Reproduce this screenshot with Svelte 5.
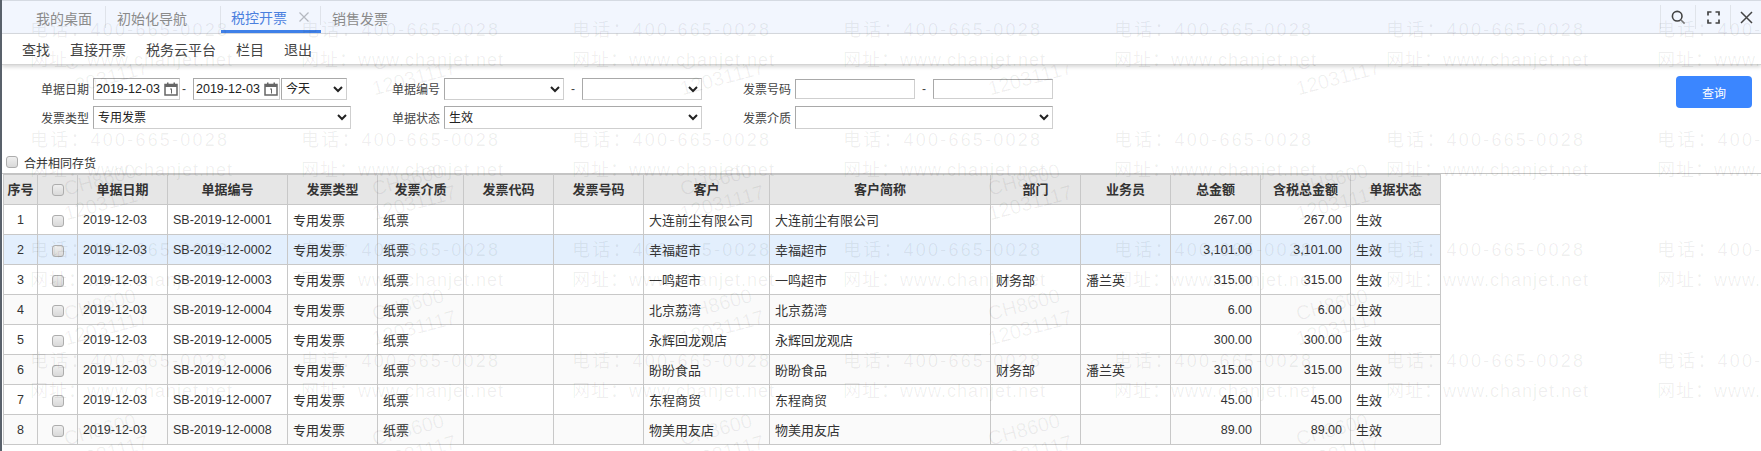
<script>
	const tabs = [
		{ name: '我的桌面', cls: '' },
		{ name: '初始化导航', cls: 'wide' },
		{ name: '税控开票', cls: 'active' },
		{ name: '销售发票', cls: 'last' }
	];
	const actions = ['查找', '直接开票', '税务云平台', '栏目', '退出'];

	const columns = [
		['序号', 34], ['', 40], ['单据日期', 90], ['单据编号', 120], ['发票类型', 90],
		['发票介质', 86], ['发票代码', 90], ['发票号码', 90], ['客户', 126], ['客户简称', 221],
		['部门', 90], ['业务员', 90], ['总金额', 90], ['含税总金额', 90], ['单据状态', 90]
	];

	const rows = [
		['大连前尘有限公司', '', '', '267.00'],
		['幸福超市', '', '', '3,101.00'],
		['一鸣超市', '财务部', '潘兰英', '315.00'],
		['北京荔湾', '', '', '6.00'],
		['永辉回龙观店', '', '', '300.00'],
		['盼盼食品', '财务部', '潘兰英', '315.00'],
		['东程商贸', '', '', '45.00'],
		['物美用友店', '', '', '89.00']
	];

	// watermark tiles
	const phoneX = [30, 301, 572, 843, 1114, 1386, 1657];
	const phoneY = [30, 140, 250, 361];
	const stampX = [53, 361, 669, 977, 1285];
	const stampY = [-23, 102, 227, 352];
</script>

<div class="page">
	<header class="topbar">
		<nav class="tabs">
			{#each tabs as tab}
				<div class="tab {tab.cls}">
					<span>{tab.name}</span>
					{#if tab.cls === 'active'}
						<svg class="tab-close" width="10" height="10" viewBox="0 0 10 10">
							<path d="M0.5 0.5L9.5 9.5M9.5 0.5L0.5 9.5" stroke="#b4b8c0" stroke-width="1.2" fill="none" />
						</svg>
					{/if}
				</div>
			{/each}
		</nav>
		<div class="tools">
			<div class="tool">
				<svg width="15" height="15" viewBox="0 0 15 15" fill="none" stroke="#444" stroke-width="1.6">
					<circle cx="6.2" cy="6.2" r="4.8" />
					<path d="M10 10L13.6 13.6" stroke="#777" />
				</svg>
			</div>
			<div class="tool">
				<svg width="13" height="13" viewBox="0 0 13 13" fill="none" stroke="#444" stroke-width="1.7">
					<path d="M1 4.5V1H4.5M8.5 1H12V4.5M12 8.5V12H8.5M4.5 12H1V8.5" />
				</svg>
			</div>
			<div class="tool">
				<svg width="13" height="13" viewBox="0 0 13 13" fill="none" stroke="#444" stroke-width="1.5">
					<path d="M1 1L12 12M12 1L1 12" />
				</svg>
			</div>
		</div>
	</header>

	<div class="toolbar">
		{#each actions as action}
			<span>{action}</span>
		{/each}
	</div>

	<section class="filters">
		<div class="grid">
			<label class="lbl" for="d1">单据日期</label>
			<div class="ctrl">
				<div class="date">
					<input id="d1" value="2019-12-03" />
					<svg width="14" height="14" viewBox="0 0 14 14">
						<path d="M1 2.5H13V13H1Z" fill="none" stroke="#666" stroke-width="1.5" />
						<path d="M1 2H13V5H1Z M3 0.5H4.5V3H3Z M9.5 0.5H11V3H9.5Z M6 6.5H8V11.5H7V7.5H6Z" fill="#666" />
					</svg>
				</div>
				<span class="dash small">-</span>
				<div class="date">
					<input value="2019-12-03" />
					<svg width="14" height="14" viewBox="0 0 14 14">
						<path d="M1 2.5H13V13H1Z" fill="none" stroke="#666" stroke-width="1.5" />
						<path d="M1 2H13V5H1Z M3 0.5H4.5V3H3Z M9.5 0.5H11V3H9.5Z M6 6.5H8V11.5H7V7.5H6Z" fill="#666" />
					</svg>
				</div>
				<select class="today"><option>今天</option></select>
			</div>

			<label class="lbl" for="n1">单据编号</label>
			<div class="ctrl">
				<select id="n1" class="half"><option></option></select>
				<span class="dash">-</span>
				<select class="half"><option></option></select>
			</div>

			<label class="lbl" for="p1">发票号码</label>
			<div class="ctrl">
				<input id="p1" class="half code" />
				<span class="dash">-</span>
				<input class="half code" />
			</div>

			<label class="lbl" for="t1">发票类型</label>
			<select id="t1" class="full"><option>专用发票</option></select>

			<label class="lbl" for="s1">单据状态</label>
			<select id="s1" class="full"><option>生效</option></select>

			<label class="lbl" for="m1">发票介质</label>
			<select id="m1" class="full"><option></option></select>
		</div>
		<button class="search">查询</button>
	</section>

	<label class="merge"><input type="checkbox" class="check" />合并相同存货</label>

	<div class="list">
		<table>
			<colgroup>
				{#each columns as col}
					<col style="width: {col[1]}px" />
				{/each}
			</colgroup>
			<thead>
				<tr>
					{#each columns as col, i}
						<th>
							{#if i === 1}<input type="checkbox" class="check" />{:else}{col[0]}{/if}
						</th>
					{/each}
				</tr>
			</thead>
			<tbody>
				{#each rows as row, i}
					<tr class:selected={i === 1} class:alt={i > 1 && i % 2 === 1}>
						<td class="center latin">{i + 1}</td>
						<td class="center"><input type="checkbox" class="check" /></td>
						<td class="latin">2019-12-03</td>
						<td class="latin">SB-2019-12-000{i + 1}</td>
						<td>专用发票</td>
						<td>纸票</td>
						<td></td>
						<td></td>
						<td>{row[0]}</td>
						<td>{row[0]}</td>
						<td>{row[1]}</td>
						<td>{row[2]}</td>
						<td class="amount latin">{row[3]}</td>
						<td class="amount latin">{row[3]}</td>
						<td>生效</td>
					</tr>
				{/each}
			</tbody>
		</table>
	</div>

	<div class="stamps">
		{#each stampY as y}
			{#each stampX as x}
				<div class="stamp" style="left: {x}px; top: {y}px">CH8600<br />12031117</div>
			{/each}
		{/each}
	</div>
	<div class="marks">
		{#each phoneY as y}
			{#each phoneX as x}
				<div class="mark phone" style="left: {x}px; top: {y - 11}px">电话：400-665-0028</div>
				<div class="mark web" style="left: {x}px; top: {y + 19}px">网址：www.chanjet.net</div>
			{/each}
		{/each}
	</div>
</div>

<style>
	:global(body) {
		margin: 0;
		background: #fff;
	}

	.page {
		position: relative;
		width: 1761px;
		height: 451px;
		box-sizing: border-box;
		overflow: hidden;
		border-left: 2px solid #59616b;
		font-family: 'Liberation Sans', 'Noto Sans CJK SC', sans-serif;
		font-size: 13px;
		color: #333;
	}

	.topbar {
		display: flex;
		justify-content: space-between;
		height: 34px;
		box-sizing: border-box;
		margin-left: -2px;
		background: #f2f6fe;
		border-top: 1px solid #d5dae2;
		border-bottom: 1px solid #d8dbe0;
	}

	.tabs {
		display: flex;
		margin-left: 25px;
	}

	.tab {
		position: relative;
		display: flex;
		align-items: center;
		box-sizing: border-box;
		height: 32px;
		padding: 2px 14px 0 11px;
		font-size: 14px;
		color: #8b8b8b;
	}

	.tab::after {
		content: '';
		position: absolute;
		right: 0;
		top: 5px;
		bottom: 5px;
		width: 1px;
		background: #dfe3ea;
	}

	.tab.wide {
		padding-right: 34px;
	}

	.tab.active {
		padding: 3px 12px 0 10px;
		gap: 12px;
		color: #4a80de;
		border-bottom: 3px solid #3f80e8;
	}

	.tab.last::after {
		display: none;
	}

	.tools {
		display: flex;
	}

	.tool {
		display: flex;
		align-items: center;
		justify-content: center;
		width: 34px;
		height: 24px;
		margin-top: 4px;
		border-left: 1px solid #e0e4ea;
	}

	.tool:last-child {
		width: 30px;
	}

	.toolbar {
		display: flex;
		align-items: center;
		gap: 20px;
		height: 31px;
		box-sizing: border-box;
		padding-left: 20px;
		background: #fff;
		font-size: 14px;
		color: #444;
		border-bottom: 1px solid #d4d4d4;
		box-shadow: 0 2px 4px rgba(0, 0, 0, 0.16);
	}

	.filters {
		display: flex;
		justify-content: space-between;
		align-items: flex-start;
		padding: 12px 9px 0 1px;
		font-size: 12px;
	}

	.grid {
		display: grid;
		grid-template-columns: 90px 258px 93px 258px 93px 258px;
		grid-auto-rows: 23px;
		row-gap: 6px;
		align-items: center;
	}

	.lbl {
		padding-right: 4px;
		text-align: right;
		color: #444;
	}

	.ctrl {
		display: flex;
		align-items: center;
		height: 23px;
	}

	input,
	select {
		box-sizing: border-box;
		height: 22px;
		margin: 0;
		border: 1px solid;
		border-color: #a9a9a9 #cfcfcf #cfcfcf #a9a9a9;
		border-radius: 0;
		background: #fff;
		font: inherit;
		color: #222;
		outline: none;
	}

	.date {
		display: flex;
		align-items: center;
		box-sizing: border-box;
		width: 87px;
		height: 22px;
		padding-right: 1px;
		border: 1px solid;
		border-color: #a9a9a9 #cfcfcf #cfcfcf #a9a9a9;
	}

	.date input {
		flex: 1;
		min-width: 0;
		height: 18px;
		padding: 0 0 0 2px;
		border: 0;
		font-size: 12.5px;
	}

	.dash {
		width: 18px;
		text-align: center;
		color: #444;
	}

	.dash.small {
		width: 13px;
		text-align: left;
		padding-left: 2px;
		box-sizing: border-box;
	}

	.today {
		width: 66px;
		margin-left: 1px;
	}

	.half {
		width: 120px;
	}

	.code {
		height: 20px;
		padding: 0 2px;
	}

	.full {
		width: 258px;
		height: 23px;
	}

	.search {
		width: 76px;
		height: 32px;
		margin-top: -1px;
		padding: 0;
		border: 0;
		border-radius: 4px;
		background: #3b86ff;
		font: inherit;
		color: #fff;
	}

	.merge {
		display: flex;
		align-items: center;
		gap: 6px;
		height: 14px;
		margin: 26px 0 4px 4px;
		font-size: 12px;
		color: #333;
	}

	input.check {
		appearance: none;
		box-sizing: border-box;
		width: 12px;
		height: 12px;
		border: 1px solid #adadad;
		border-radius: 3px;
		background: linear-gradient(#efefef, #d9d9d9);
		vertical-align: middle;
	}

	.list {
		border-top: 1px solid #c4c4c4;
	}

	table {
		table-layout: fixed;
		width: 1438px;
		margin-left: 1px;
		border-collapse: collapse;
		font-size: 13px;
	}

	th,
	td {
		height: 29px;
		padding: 0 5px;
		border: 1px solid #c8c8c8;
		overflow: hidden;
		white-space: nowrap;
		box-sizing: content-box;
	}

	th {
		height: 27px;
		padding: 0 0 2px;
		background: #e6e6e6;
		border-top: 1px solid #c4c4c4;
		font-weight: 700;
		text-align: center;
		color: #333;
	}

	td {
		color: #333;
	}

	.latin {
		font-size: 12.5px;
	}

	.center {
		padding: 0;
		text-align: center;
	}

	.amount {
		padding-right: 8px;
		text-align: right;
	}

	tr.selected td {
		background: #e3effd;
	}

	tr.alt td {
		background: #fafafa;
	}

	.marks,
	.stamps {
		position: absolute;
		left: -2px;
		right: 0;
		bottom: 0;
		pointer-events: none;
	}

	.marks {
		top: 0;
	}

	.stamps {
		top: 65px;
		overflow: hidden;
	}

	.mark {
		position: absolute;
		white-space: nowrap;
		font-size: 18px;
		line-height: 22px;
		color: rgba(0, 0, 0, 0.065);
	}

	.phone {
		letter-spacing: 2.2px;
	}

	.web {
		letter-spacing: 1px;
	}

	.stamp {
		position: absolute;
		width: 100px;
		text-align: center;
		font-size: 20px;
		line-height: 24px;
		color: rgba(0, 0, 0, 0.06);
		transform: rotate(-15deg);
		white-space: nowrap;
	}
</style>
